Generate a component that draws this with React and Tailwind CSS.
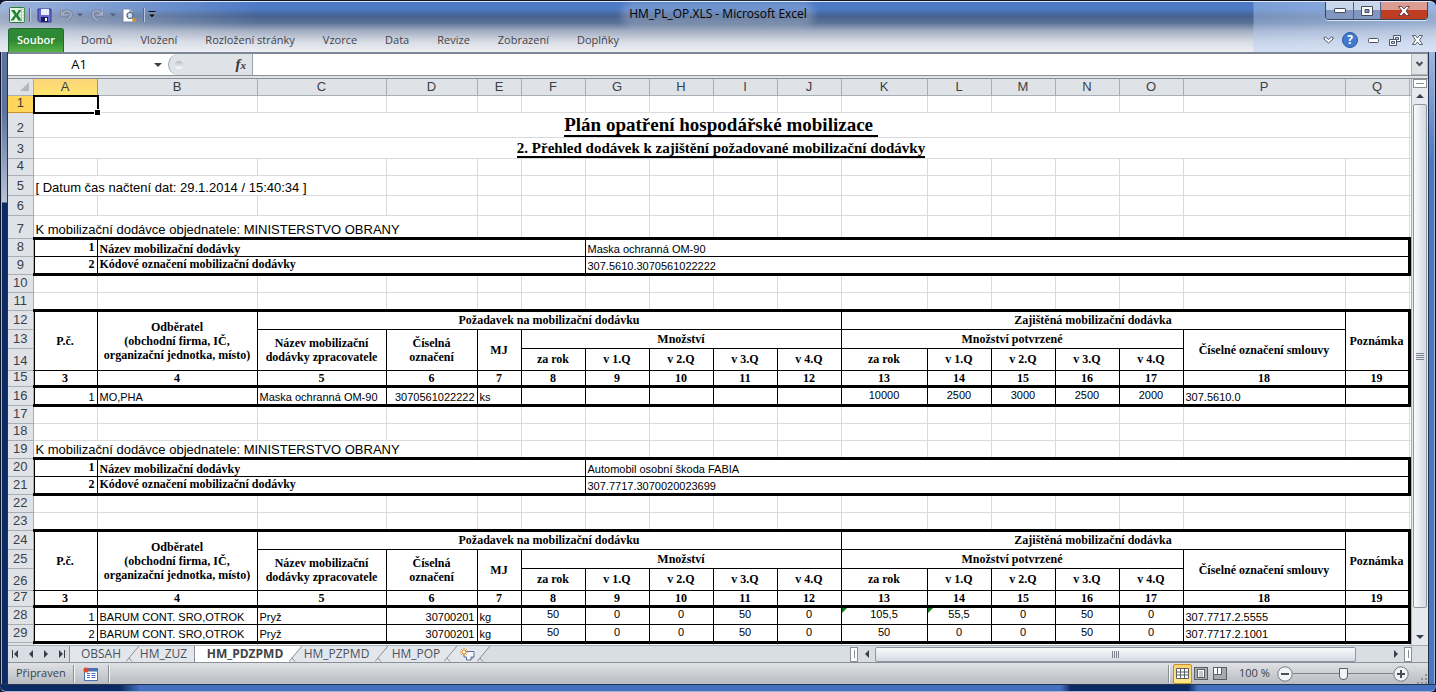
import React, { useState } from "react";

/* =====================================================
   WORKBOOK DATA
====================================================== */

const COLUMNS = [
  { id: "A", width: "w-[64px]" },
  { id: "B", width: "w-[160px]" },
  { id: "C", width: "w-[129px]" },
  { id: "D", width: "w-[91px]" },
  { id: "E", width: "w-[44px]" },
  { id: "F", width: "w-[64px]" },
  { id: "G", width: "w-[64px]" },
  { id: "H", width: "w-[64px]" },
  { id: "I", width: "w-[64px]" },
  { id: "J", width: "w-[64px]" },
  { id: "K", width: "w-[86px]" },
  { id: "L", width: "w-[64px]" },
  { id: "M", width: "w-[64px]" },
  { id: "N", width: "w-[64px]" },
  { id: "O", width: "w-[64px]" },
  { id: "P", width: "w-[162px]" },
  { id: "Q", width: "w-[64px]" },
];

const RIBBON_TABS = [
  "Domů",
  "Vložení",
  "Rozložení stránky",
  "Vzorce",
  "Data",
  "Revize",
  "Zobrazení",
  "Doplňky",
];

const SUPPLIES = [
  {
    firstRow: 7,
    name: "Maska ochranná OM-90",
    code: "307.5610.3070561022222",
    orders: [
      {
        firm: "MO,PHA",
        item: "Maska ochranná OM-90",
        number: "3070561022222",
        unit: "ks",
        requested: ["", "", "", "", ""],
        confirmed: ["10000", "2500", "3000", "2500", "2000"],
        contract: "307.5610.0",
      },
    ],
  },
  {
    firstRow: 19,
    name: "Automobil osobní škoda FABIA",
    code: "307.7717.3070020023699",
    orders: [
      {
        firm: "BARUM CONT. SRO,OTROK",
        item: "Pryž",
        number: "30700201",
        unit: "kg",
        requested: ["50", "0", "0", "50", "0"],
        confirmed: ["105,5", "55,5", "0", "50", "0"],
        contract: "307.7717.2.5555",
      },
      {
        firm: "BARUM CONT. SRO,OTROK",
        item: "Pryž",
        number: "30700201",
        unit: "kg",
        requested: ["50", "0", "0", "50", "0"],
        confirmed: ["50", "0", "0", "50", "0"],
        contract: "307.7717.2.1001",
      },
    ],
  },
];

const QUARTERS = ["za rok", "v 1.Q", "v 2.Q", "v 3.Q", "v 4.Q"];

/* =====================================================
   CELL STYLES
====================================================== */

const GRID = "border-r border-b border-[#d8dadc]";
const BOX = "border-r border-b border-black";
const BOX_LAST = "border-r border-b-[3px] border-black";
const EDGE = "border-r-[3px] border-b border-black";
const EDGE_LAST = "border-r-[3px] border-b-[3px] border-black";
const LEFT = "shadow-[inset_1px_0_0_#000]";
const SERIF = "font-['Liberation_Serif',serif] font-bold text-[12px] leading-[14px]";
const DATA = "text-[11px] leading-[13px]";

/* =====================================================
   WINDOW CHROME
====================================================== */

function ExcelLogo() {
  return (
    <svg width="17" height="17" viewBox="0 0 17 17">
      <rect x="0.5" y="0.5" width="15" height="15" rx="1" fill="#e9f3e6" stroke="#2c7a35" />
      <path d="M10 2h5v12h-5z" fill="#fff" stroke="#8fc08d" strokeWidth="0.6" />
      <path d="M10 5h5M10 8h5M10 11h5M12.5 2v12" stroke="#8fc08d" strokeWidth="0.7" />
      <path d="M2 3h3.600l2 3.600L9.800 3h2.600L9 8l3.800 5.500H9.300L7 9.800 4.600 13.500H1.500L5.600 8z" fill="#1f8434" />
    </svg>
  );
}

function SaveIcon() {
  return (
    <svg width="15" height="15" viewBox="0 0 15 15">
      <path d="M1 1h13v13H2.500L1 12.500z" fill="#6468cf" stroke="#31348f" />
      <rect x="4" y="1" width="8" height="6" fill="#e8eefb" />
      <rect x="4" y="9" width="7" height="5" fill="#1d2058" />
      <rect x="8" y="10" width="2" height="3" fill="#fff" />
    </svg>
  );
}

function UndoIcon({ flip }) {
  return (
    <svg width="13" height="14" viewBox="0 0 13 14" className={flip ? "-scale-x-100" : ""}>
      <path d="M1.500 1v6h6M2.500 6C5 2 10 2 11 5.500 11.500 8.500 9 11 6 12.500" fill="none" stroke="#6d7d9c" strokeWidth="3" />
      <path d="M1.500 1v6h6M2.500 6C5 2 10 2 11 5.500 11.500 8.500 9 11 6 12.500" fill="none" stroke="#a9b1c2" strokeWidth="1.600" />
    </svg>
  );
}

function PreviewIcon() {
  return (
    <svg width="15" height="15" viewBox="0 0 15 15">
      <path d="M1 1h7l3 3v10H1z" fill="#fff" stroke="#7688a5" />
      <path d="M8 1v3h3" fill="#d5deea" stroke="#7688a5" />
      <circle cx="8" cy="7.500" r="3" fill="#cfe3f7" stroke="#4f6482" strokeWidth="1.200" />
      <path d="M10.500 10l3 3.500" stroke="#e0962a" strokeWidth="2.400" />
    </svg>
  );
}

function Arrow({ dir = "down", className = "fill-[#3b4048]" }) {
  const shapes = {
    down: "M0 2h8L4 6z",
    up: "M0 6h8L4 2z",
    left: "M6 0v8L2 4z",
    right: "M2 0v8l4-4z",
  };
  return (
    <svg width="8" height="8" viewBox="0 0 8 8" className={className}>
      <path d={shapes[dir]} />
    </svg>
  );
}

function Separator() {
  return <span className="h-3.5 w-px bg-[#5a6a88] shadow-[1px_0_0_#b9c6dc]" />;
}

function TitleBar() {
  return (
    <div className="relative flex h-[26px] justify-between">
      {/* QUICK ACCESS */}
      <div className="flex items-center pl-[9px]">
        <ExcelLogo />
        <span className="w-[3px]" />
        <Separator />
        <button aria-label="Uložit" className="ml-[7px]">
          <SaveIcon />
        </button>
        <button aria-label="Zpět" className="ml-2 flex items-center gap-1">
          <UndoIcon />
          <Arrow className="fill-[#4f6082] w-1.5" />
        </button>
        <button aria-label="Znovu" className="ml-2 flex items-center gap-1.5">
          <UndoIcon flip />
          <Arrow className="fill-[#4f6082] w-1.5" />
        </button>
        <button aria-label="Náhled" className="ml-1.5">
          <PreviewIcon />
        </button>
        <span className="w-[6px]" />
        <Separator />
        <button aria-label="Přizpůsobit panel" className="ml-1">
          <svg width="8" height="8" viewBox="0 0 8 8">
            <path d="M0.500 0.500h7" stroke="#111" />
            <path d="M0.500 3h7L4 7z" fill="#111" stroke="#d6deec" strokeWidth="0.400" />
          </svg>
        </button>
      </div>

      {/* TITLE */}
      <h1 className="pointer-events-none absolute inset-x-0 top-[3px] flex justify-center">
        <span className="rounded-full bg-white/20 px-1 text-[12px] leading-[18px] text-black shadow-[0_0_7px_4px_rgba(255,255,255,0.2)]">
          HM_PL_OP.XLS - Microsoft Excel
        </span>
      </h1>

      {/* WINDOW BUTTONS */}
      <div className="mr-2 flex h-[18px] rounded-b-[4px] border border-t-0 border-[#36445e] shadow-[0_1px_0_#dbe5f5]">
        <button aria-label="Minimalizovat" className="flex w-7 items-center justify-center rounded-bl-[3px] border-r border-[#4e6084] bg-linear-to-b from-[#c9d5ea] from-45% to-[#8297c0] to-50%">
          <svg width="12" height="5" viewBox="0 0 12 5">
            <rect x="0.500" y="0.500" width="11" height="4" rx="0.500" fill="#fff" stroke="#454c5c" />
          </svg>
        </button>
        <button aria-label="Obnovit" className="flex w-[27px] items-center justify-center border-r border-[#4e6084] bg-linear-to-b from-[#c9d5ea] from-45% to-[#8297c0] to-50%">
          <svg width="12" height="10" viewBox="0 0 12 10">
            <path d="M0.500 0.500h11v9H0.500zM4 3.500v3h4v-3z" fill="#fff" fillRule="evenodd" stroke="#454c5c" />
          </svg>
        </button>
        <button aria-label="Zavřít" className="flex w-[46px] items-center justify-center rounded-br-[3px] bg-linear-to-b from-[#dd9c92] from-45% to-[#bd3c22] to-50%">
          <svg width="12" height="10" viewBox="0 0 12 10">
            <path d="M0.500 0.500h3.200L6 3 8.300 0.500h3.200L8 5l3.500 4.500H8.300L6 7 3.700 9.500H0.500L4 5z" fill="#fff" stroke="#5a3340" strokeWidth="0.900" />
          </svg>
        </button>
      </div>
    </div>
  );
}

function RibbonTabs() {
  return (
    <div className="flex h-6 items-stretch justify-between pl-2">
      <nav className="flex">
        <button className="mr-[3px] w-14 rounded-t-[3px] border border-b-0 border-[#1f6a2a] bg-linear-to-b from-[#2f8a38] via-[#2d8733] to-[#58b348] text-[11px] font-semibold text-white">
          Soubor
        </button>
        {RIBBON_TABS.map((t) => (
          <button key={t} className="px-3.5 text-[11px] text-[#3f444c]">
            {t}
          </button>
        ))}
      </nav>
      <div className="flex items-center pr-[13px]">
        <button aria-label="Sbalit pás karet" className="mr-2">
          <svg width="11" height="8" viewBox="0 0 11 8">
            <path d="M1 1.500 2.500 1 5.500 3.500 8.500 1 10 1.500V3L5.500 7 1 3z" fill="#fff" stroke="#4a5568" />
          </svg>
        </button>
        <button aria-label="Nápověda" className="mr-2.5 flex size-4 items-center justify-center rounded-full border border-[#2c5aa8] bg-[#4379cc] text-[12px] leading-none font-bold text-white">
          ?
        </button>
        <button aria-label="Minimalizovat okno" className="mr-2.5">
          <svg width="11" height="5" viewBox="0 0 11 5">
            <rect x="0.500" y="0.500" width="10" height="4" rx="1" fill="#fff" stroke="#4a5568" />
          </svg>
        </button>
        <button aria-label="Obnovit okno" className="mr-[11px]">
          <svg width="12" height="11" viewBox="0 0 12 11">
            <path d="M4.500 0.500h7v6h-7zM6.500 2.500v2h3v-2z" fill="#fff" fillRule="evenodd" stroke="#4a5568" />
            <path d="M0.500 4.500h7v6h-7zM2.500 6.500v2h3v-2z" fill="#fff" fillRule="evenodd" stroke="#4a5568" />
          </svg>
        </button>
        <button aria-label="Zavřít okno">
          <svg width="11" height="10" viewBox="0 0 11 10">
            <path d="M0.500 0.500h3L5.500 3l2-2.500h3L7.500 5l3 4.500h-3L5.500 7l-2 2.500h-3L3.500 5z" fill="#fff" stroke="#4a5568" strokeWidth="0.900" />
          </svg>
        </button>
      </div>
    </div>
  );
}

function FormulaBar({ cell }) {
  return (
    <div className="flex h-[22px] border-b border-[#8b9097] bg-white">
      <label className="flex w-40 items-center">
        <input
          aria-label="Pole názvů"
          defaultValue={cell}
          className="w-[142px] bg-transparent text-center text-[13px] text-black outline-none"
        />
        <span className="w-1" />
        <Arrow />
      </label>
      <div className="flex w-[85px] items-center justify-between rounded-l-full border-l border-[#9aa0a8] border-r bg-[#dfe3e8] pr-1.5">
        <span className="ml-1.5 size-2 rounded-full bg-linear-to-b from-[#b5bac1] to-white" />
        <button aria-label="Vložit funkci" className="font-['Liberation_Serif',serif] text-[15px] leading-none font-bold italic text-[#33363b]">
          f<span className="text-[11px]">x</span>
        </button>
      </div>
      <input aria-label="Řádek vzorců" className="min-w-0 flex-1 px-1 text-[12px] outline-none" />
      <button aria-label="Rozbalit řádek vzorců" className="flex w-[17px] items-center justify-center border border-t-0 border-[#b3b7bd] bg-[#dfe3e8]">
        <svg width="7" height="6" viewBox="0 0 7 6">
          <path d="M0.500 1l3 3 3-3" fill="none" stroke="#4a4f57" strokeWidth="2" />
        </svg>
      </button>
    </div>
  );
}

/* =====================================================
   SHEET
====================================================== */

function RowHead({ n, active }) {
  return (
    <th
      scope="row"
      className={`border-r border-b px-0 pt-0 pb-[3px] text-center align-bottom font-['Liberation_Sans',sans-serif] text-[13px] leading-[12px] font-normal ${
        active
          ? "border-[#c98f2b] bg-[#ffd65a] text-[#3b3b3b]"
          : "border-[#a9aeb5] bg-[#dfe3e8] text-[#3b3f46]"
      }`}
    >
      {n}
    </th>
  );
}

function EmptyCells({ from = 0, bottom = GRID }) {
  return (
    <>
      {COLUMNS.slice(from).map((c) => (
        <td key={c.id} className={bottom} />
      ))}
      <td className="border-b border-[#d8dadc]" />
    </>
  );
}

const GRID_OVER_BOX = "border-r border-r-[#d8dadc] border-b-[3px] border-b-black";

function SupplyBlock({ supply }) {
  const r = supply.firstRow;
  const first = r === 7;
  return (
    <>
      {/* ORDERED SUPPLY */}
      <tr className={first ? "h-[23px]" : "h-[18px]"}>
        <RowHead n={r} />
        <td colSpan={4} className={`${GRID_OVER_BOX} pl-0.5 align-bottom text-[13px] leading-[14px] whitespace-nowrap`}>
          K mobilizační dodávce objednatele: MINISTERSTVO OBRANY
        </td>
        <EmptyCells from={4} bottom={GRID_OVER_BOX} />
      </tr>
      <tr className="h-[18px]">
        <RowHead n={r + 1} />
        <td className={`${BOX} ${LEFT} ${SERIF} pr-0.5 text-right align-top`}>1</td>
        <td colSpan={5} className={`${BOX} ${SERIF} pl-0.5 align-bottom`}>
          Název mobilizační dodávky
        </td>
        <td colSpan={11} className={`${EDGE} ${DATA} pl-0.5 align-bottom`}>
          {supply.name}
        </td>
        <td />
      </tr>
      <tr className="h-[18px]">
        <RowHead n={r + 2} />
        <td className={`${BOX_LAST} ${LEFT} ${SERIF} pr-0.5 text-right align-top`}>2</td>
        <td colSpan={5} className={`${BOX_LAST} ${SERIF} pl-0.5 align-top`}>
          Kódové označení mobilizační dodávky
        </td>
        <td colSpan={11} className={`${EDGE_LAST} ${DATA} pl-0.5 align-bottom`}>
          {supply.code}
        </td>
        <td />
      </tr>
      <tr className="h-[18px]">
        <RowHead n={r + 3} />
        <EmptyCells />
      </tr>
      <tr className="h-[18px]">
        <RowHead n={r + 4} />
        <EmptyCells bottom={GRID_OVER_BOX} />
      </tr>

      {/* TABLE HEADINGS */}
      <tr className={`h-[19px] text-center ${SERIF}`}>
        <RowHead n={r + 5} />
        <td rowSpan={3} className={`${BOX} ${LEFT}`}>
          P.č.
        </td>
        <td rowSpan={3} className={`${BOX} whitespace-nowrap`}>
          Odběratel
          <br />
          (obchodní firma, IČ,
          <br />
          organizační jednotka, místo)
        </td>
        <td colSpan={8} className={BOX}>
          Požadavek na mobilizační dodávku
        </td>
        <td colSpan={6} className={BOX}>
          Zajištěná mobilizační dodávka
        </td>
        <td rowSpan={3} className={EDGE}>
          Poznámka
        </td>
        <td />
      </tr>
      <tr className={`h-[19px] text-center ${SERIF}`}>
        <RowHead n={r + 6} />
        <td rowSpan={2} className={BOX}>
          Název mobilizační dodávky zpracovatele
        </td>
        <td rowSpan={2} className={BOX}>
          Číselná
          <br />
          označení
        </td>
        <td rowSpan={2} className={BOX}>
          MJ
        </td>
        <td colSpan={5} className={BOX}>
          Množství
        </td>
        <td colSpan={5} className={BOX}>
          Množství potvrzené
        </td>
        <td rowSpan={2} className={BOX}>
          Číselné označení smlouvy
        </td>
        <td />
      </tr>
      <tr className={`h-[22px] text-center ${SERIF}`}>
        <RowHead n={r + 7} />
        {[...QUARTERS, ...QUARTERS].map((q, i) => (
          <td key={i} className={BOX}>
            {q}
          </td>
        ))}
        <td />
      </tr>
      <tr className={`h-[16px] text-center ${SERIF}`}>
        <RowHead n={r + 8} />
        {COLUMNS.map((c, i) => (
          <td
            key={c.id}
            className={`leading-[12px] ${i === 16 ? EDGE_LAST : BOX_LAST} ${i === 0 ? LEFT : ""}`}
          >
            {i + 3}
          </td>
        ))}
        <td />
      </tr>

      {/* ORDERS */}
      {supply.orders.map((o, i) => {
        const last = i === supply.orders.length - 1;
        const box = last ? BOX_LAST : BOX;
        const numbers = last ? "align-middle" : "align-top";
        return (
          <tr key={i} className={`${first ? "h-[19px]" : "h-[18px]"} ${DATA}`}>
            <RowHead n={r + 9 + i} />
            <td className={`${box} ${LEFT} pr-0.5 text-right align-bottom`}>{i + 1}</td>
            <td className={`${box} pl-0.5 align-bottom whitespace-nowrap`}>{o.firm}</td>
            <td className={`${box} pl-0.5 align-bottom whitespace-nowrap`}>{o.item}</td>
            <td className={`${box} pr-0.5 text-right align-bottom`}>{o.number}</td>
            <td className={`${box} pl-0.5 align-bottom`}>{o.unit}</td>
            {[...o.requested, ...o.confirmed].map((v, j) => (
              <td key={j} className={`${box} ${numbers} relative text-center`}>
                {v.includes(",") && (
                  <svg width="5" height="5" viewBox="0 0 5 5" className="absolute top-0 left-0">
                    <path d="M0 0h5L0 5z" fill="#0a7a1c" />
                  </svg>
                )}
                {v}
              </td>
            ))}
            <td className={`${box} pl-0.5 align-bottom`}>{o.contract}</td>
            <td className={last ? EDGE_LAST : EDGE} />
            <td />
          </tr>
        );
      })}
    </>
  );
}

function Sheet() {
  return (
    <table className="w-full table-fixed border-collapse bg-white font-['Liberation_Sans',sans-serif] text-black">
      <colgroup>
        <col className="w-[25px]" />
        {COLUMNS.map((c) => (
          <col key={c.id} className={c.width} />
        ))}
        <col />
      </colgroup>
      <thead>
        <tr className="h-4 bg-[#dfe3e8] text-[13px] leading-[14px] text-[#3b3f46]">
          <th className="border-r border-b border-[#a9aeb5]">
            <svg width="9" height="9" viewBox="0 0 9 9" className="ml-auto mr-1">
              <path d="M9 0v9H0z" fill="#b4b9c0" />
            </svg>
          </th>
          {COLUMNS.map((c) => (
            <th
              key={c.id}
              scope="col"
              className={`border-r border-b font-normal ${
                c.id === "A"
                  ? "border-[#c98f2b] bg-linear-to-b from-[#fbd377] to-[#ffe66e]"
                  : "border-[#a9aeb5]"
              }`}
            >
              {c.id}
            </th>
          ))}
          <th className="border-b border-[#a9aeb5]" />
        </tr>
      </thead>
      <tbody>
        <tr className="h-[17px]">
          <RowHead n={1} active />
          <td className="relative border-r border-b border-[#d8dadc]">
            <span className="absolute -inset-px -right-0.5 -bottom-0.5 border-2 border-black" />
            <span className="absolute -right-1 -bottom-1 size-[7px] border border-white bg-black" />
          </td>
          <EmptyCells from={1} />
        </tr>
        <tr className="h-[25px]">
          <RowHead n={2} />
          <td colSpan={17} className={`${GRID} text-center align-middle font-['Liberation_Serif',serif] text-[19px] leading-[20px] font-bold`}>
            <span className="border-b-2 border-black whitespace-pre">{"Plán opatření hospodářské mobilizace "}</span>
          </td>
          <td className="border-b border-[#d8dadc]" />
        </tr>
        <tr className="h-[21px]">
          <RowHead n={3} />
          <td colSpan={17} className={`${GRID} text-center align-middle font-['Liberation_Serif',serif] text-[15px] leading-[18px] font-bold`}>
            <span className="border-b-2 border-black">
              2. Přehled dodávek k zajištění požadované mobilizační dodávky
            </span>
          </td>
          <td className="border-b border-[#d8dadc]" />
        </tr>
        <tr className="h-[17px]">
          <RowHead n={4} />
          <EmptyCells />
        </tr>
        <tr className="h-5">
          <RowHead n={5} />
          <td colSpan={3} className={`${GRID} pl-0.5 align-bottom text-[13px] leading-[14px] whitespace-nowrap`}>
            [ Datum čas načtení dat: 29.1.2014 / 15:40:34 ]
          </td>
          <EmptyCells from={3} />
        </tr>
        <tr className="h-5">
          <RowHead n={6} />
          <EmptyCells />
        </tr>

        <SupplyBlock supply={SUPPLIES[0]} />

        <tr className="h-[18px]">
          <RowHead n={17} />
          <EmptyCells />
        </tr>
        <tr className="h-[17px]">
          <RowHead n={18} />
          <EmptyCells />
        </tr>

        <SupplyBlock supply={SUPPLIES[1]} />

        <tr className="h-[18px]">
          <RowHead />
          <EmptyCells />
        </tr>
      </tbody>
    </table>
  );
}

function VerticalScroll() {
  return (
    <div className="flex w-[17px] shrink-0 flex-col items-center border-l border-[#a9aeb5] bg-[#e6e9ee]">
      <span className="flex h-[9px] w-3.5 items-center justify-center border border-[#8b9097] bg-white">
        <span className="h-px w-2 bg-[#8b9097]" />
      </span>
      <button aria-label="Nahoru" className="flex h-4 items-center">
        <Arrow dir="up" />
      </button>
      <div className="flex w-full flex-1 flex-col items-center">
        <div className="flex h-[96%] w-3.5 flex-col items-center justify-center gap-px rounded-[2px] border border-[#8f96a3] bg-linear-to-r from-[#fafbfc] to-[#d5d9e1]">
          <span className="h-px w-2 bg-[#7d838d]" />
          <span className="h-px w-2 bg-[#7d838d]" />
          <span className="h-px w-2 bg-[#7d838d]" />
          <span className="h-px w-2 bg-[#7d838d]" />
        </div>
      </div>
      <button aria-label="Dolů" className="flex h-4 items-center">
        <Arrow dir="down" />
      </button>
    </div>
  );
}

/* =====================================================
   BOTTOM BARS
====================================================== */

// Slanted edge between two sheet tabs
function Slant({ left = "#e3e6eb", right = "#e3e6eb" }) {
  return (
    <svg width="13" height="16" viewBox="0 0 13 16" className="shrink-0">
      <path d="M0 0h13L0 16z" fill={left} />
      <path d="M13 0v16H0z" fill={right} />
      <path d="M13 0L0 15.500M3 12l3 3.500" fill="none" stroke="#8b9097" />
    </svg>
  );
}

function NavArrow({ dir, end, label }) {
  return (
    <button aria-label={label} className="flex h-full w-[15px] items-center justify-center">
      <svg width="8" height="8" viewBox="0 0 8 8" className={dir === "right" ? "-scale-x-100" : ""}>
        <path d="M6 0v8L2 4z" fill="#3b4048" />
        {end && <path d="M0.500 0v8" stroke="#3b4048" />}
      </svg>
    </button>
  );
}

function SheetTabs() {
  const [active, setActive] = useState("HM_PDZPMD");
  const tab = (name, width) => (
    <button
      onClick={() => setActive(name)}
      className={`h-4 text-center text-[12px] leading-4 ${width} ${
        active === name ? "bg-white font-bold text-[#3f434a]" : "bg-[#e3e6eb] text-[#4d525a]"
      }`}
    >
      {name}
    </button>
  );
  const fill = (name) => (active === name ? "#ffffff" : "#e3e6eb");

  return (
    <div className="flex h-[17px] items-start border-t border-[#a9aeb5] bg-[#d9dde4]">
      <div className="flex h-4 w-[62px] items-center border-r border-[#8b9097]">
        <NavArrow dir="left" end label="První list" />
        <NavArrow dir="left" label="Předchozí list" />
        <NavArrow dir="right" label="Další list" />
        <NavArrow dir="right" end label="Poslední list" />
      </div>
      {tab("OBSAH", "w-14 pl-1.5")}
      <Slant left={fill("OBSAH")} right={fill("HM_ZUZ")} />
      {tab("HM_ZUZ", "w-[56px] border-r border-[#8b9097] pr-1.5")}
      {tab("HM_PDZPMD", "w-[94px] pl-1.5")}
      <Slant left={fill("HM_PDZPMD")} right={fill("HM_PZPMD")} />
      {tab("HM_PZPMD", "w-[73px] pr-1")}
      <Slant left={fill("HM_PZPMD")} right={fill("HM_POP")} />
      {tab("HM_POP", "w-[56px]")}
      <Slant left={fill("HM_POP")} />
      <button aria-label="Vložit list" className="flex h-4 w-5 items-center justify-center bg-[#e3e6eb]">
        <svg width="15" height="13" viewBox="0 0 15 13">
          <path d="M4 3.500h10V9l-3 3H6.500V9H4z" fill="#f4f7fd" stroke="#5c6f9b" />
          <path d="M11 12V9h3" fill="#b9c8e6" stroke="#5c6f9b" />
          <path d="M4 0v8M0 4h8M1.200 1.200l5.600 5.600M6.800 1.200L1.200 6.800" stroke="#e08f1d" />
          <circle cx="4" cy="4" r="1.500" fill="#fff3c4" />
        </svg>
      </button>
      <Slant right="#d9dde4" />

      {/* HORIZONTAL SCROLL */}
      <div className="ml-auto flex h-4 w-[578px] items-center">
        <span className="flex h-[15px] w-2 items-center justify-center border border-[#8b9097] bg-white">
          <span className="h-2 w-px bg-[#8b9097]" />
        </span>
        <button aria-label="Doleva" className="flex h-4 w-[17px] items-center justify-center">
          <Arrow dir="left" />
        </button>
        <div className="flex h-[15px] w-[481px] items-center justify-center gap-px rounded-[2px] border border-[#8f96a3] bg-linear-to-b from-[#fafbfc] to-[#d5d9e1]">
          <span className="h-[7px] w-px bg-[#7d838d]" />
          <span className="h-[7px] w-px bg-[#7d838d]" />
          <span className="h-[7px] w-px bg-[#7d838d]" />
          <span className="h-[7px] w-px bg-[#7d838d]" />
        </div>
        <button aria-label="Doprava" className="ml-auto flex h-4 w-[17px] items-center justify-center">
          <Arrow dir="right" />
        </button>
        <span className="flex h-[15px] w-2 items-center justify-center border border-[#8b9097] bg-white">
          <span className="h-2 w-px bg-[#8b9097]" />
        </span>
        <span className="w-4" />
      </div>
    </div>
  );
}

function ZoomButton({ label, plus, onClick }) {
  return (
    <button aria-label={label} onClick={onClick}>
      <svg width="16" height="16" viewBox="0 0 16 16">
        <circle cx="8" cy="8" r="7.200" fill="#f2f3f5" stroke="#747a83" />
        <path d={plus ? "M4 8h8M8 4v8" : "M4 8h8"} stroke="#4a4f57" strokeWidth="2" />
      </svg>
    </button>
  );
}

function StatusBar() {
  const [zoom, setZoom] = useState(100);
  return (
    <div className="flex h-[22px] items-center border-t border-[#8b9097] bg-linear-to-b from-[#dfe1e4] to-[#b9bcc2] text-[11px] text-[#3b3f46]">
      <span className="w-[65px] pl-2">Připraven</span>
      <span className="h-[18px] w-px bg-[#8b9097] shadow-[1px_0_0_#f3f4f6]" />
      <button aria-label="Záznam makra" className="mx-[9px]">
        <svg width="16" height="14" viewBox="0 0 16 14">
          <rect x="1.500" y="1.500" width="13" height="12" fill="#fff" stroke="#4a6fb5" />
          <rect x="2" y="2" width="12" height="2.500" fill="#4a6fb5" />
          <path d="M4 6.500h3M8.500 6.500h4M4 8.500h3M8.500 8.500h4M4 10.500h3M8.500 10.500h4" stroke="#4a6fb5" />
          <circle cx="3" cy="3" r="2.600" fill="#dc4a2b" />
        </svg>
      </button>
      <span className="h-[18px] w-px bg-[#8b9097] shadow-[1px_0_0_#f3f4f6]" />

      <div className="ml-auto flex items-center">
        <span className="mr-1 h-[18px] w-px bg-[#8b9097] shadow-[1px_0_0_#f3f4f6]" />
        <button aria-label="Normálně" className="flex h-5 w-[19px] items-center justify-center rounded-[2px] border border-[#c2902e] bg-linear-to-b from-[#fbd36a] to-[#ffea86]">
          <svg width="13" height="11" viewBox="0 0 13 11">
            <path d="M0.500 0.500h12v10H0.500zM0.500 4h12M0.500 7h12M4.500 0.500v10M8.500 0.500v10" fill="#fff" stroke="#5a5f67" />
          </svg>
        </button>
        <button aria-label="Rozložení stránky" className="ml-0.5">
          <svg width="14" height="13" viewBox="0 0 14 13">
            <rect x="0.500" y="0.500" width="13" height="12" fill="#a6abb3" stroke="#5a5f67" />
            <rect x="3.500" y="2.500" width="7" height="8" fill="#fff" stroke="#5a5f67" />
            <path d="M5 5h4M5 7h4M5 9h4" stroke="#8b9097" />
          </svg>
        </button>
        <button aria-label="Konce stránek" className="ml-[5px]">
          <svg width="14" height="13" viewBox="0 0 14 13">
            <rect x="0.500" y="0.500" width="13" height="12" fill="#a6abb3" stroke="#5a5f67" />
            <path d="M0.500 0.500h4v7h-4zM4.500 0.500h4v7h-4z" fill="#fff" stroke="#5a5f67" />
          </svg>
        </button>
        <span className="ml-3 w-[38px]">{zoom} %</span>
        <ZoomButton label="Oddálit" onClick={() => setZoom(Math.max(10, zoom - 10))} />
        <input
          type="range"
          aria-label="Lupa"
          min="0"
          max="200"
          value={zoom}
          onChange={(e) => setZoom(Number(e.target.value))}
          className="h-4 w-[100px] appearance-none bg-[linear-gradient(#7d838d,#7d838d)] bg-[length:100%_1px] bg-center bg-no-repeat [&::-webkit-slider-thumb]:h-3 [&::-webkit-slider-thumb]:w-[9px] [&::-webkit-slider-thumb]:appearance-none [&::-webkit-slider-thumb]:rounded-b-[4px] [&::-webkit-slider-thumb]:border [&::-webkit-slider-thumb]:border-[#5a5f67] [&::-webkit-slider-thumb]:bg-[#f2f3f5]"
        />
        <ZoomButton label="Přiblížit" plus onClick={() => setZoom(Math.min(200, zoom + 10))} />
        <svg width="11" height="20" viewBox="0 0 11 20" className="ml-2">
          <path d="M8 10h2v2H8zM8 14h2v2H8zM8 18h2v2H8zM4 14h2v2H4zM4 18h2v2H4zM0 18h2v2H0z" fill="#8d929a" />
        </svg>
      </div>
    </div>
  );
}

export default function App() {
  return (
    <div className="flex h-screen flex-col overflow-hidden bg-[#0d1526] pt-px font-['Open_Sans',sans-serif]">
      {/* TITLE + RIBBON */}
      <header className="rounded-t-[6px] border-t border-[#dfe8f6] bg-[linear-gradient(90deg,rgba(225,230,240,0.55),rgba(225,230,240,0)_260px,rgba(180,203,240,0)_calc(100%-183px),rgba(180,203,240,0.45)_calc(100%-182px),rgba(200,218,245,0.6)),linear-gradient(#4c79c4_0%,#4c79c4_14%,#46628f_28%,#5a7299_42%,#a3aec3_58%,#d8dce4_80%,#eff0f4_100%)]">
        <TitleBar />
        <RibbonTabs />
      </header>

      <div className="flex min-h-0 flex-1">
        <div className="w-2 shrink-0 border-x border-l-[#0d1526] border-r-[#26334d] bg-[linear-gradient(#5d739f_0px,#5d739f_60px,#b8c4d8_150px,#0b2a63_151px)] shadow-[inset_1px_0_0_#9fb3d6]" />
        <main className="flex min-w-0 flex-1 flex-col bg-[#dfe3e8]">
          <div className="h-[2px] bg-[#7e8795]" />
          <FormulaBar cell="A1" />
          <div className="h-[2px]" />
          <div className="flex min-h-0 flex-1 border-t border-[#8b9097]">
            <div className="min-w-0 flex-1 overflow-hidden bg-white">
              <Sheet />
            </div>
            <VerticalScroll />
          </div>
          <SheetTabs />
          <StatusBar />
        </main>
        <div className="w-2 shrink-0 border-x border-l-[#26334d] border-r-[#0d1526] bg-[linear-gradient(#9db8e2_0px,#4a78c0_110px)] shadow-[inset_-1px_0_0_#9fb3d6]" />
      </div>
      <div className="h-2 shrink-0 rounded-b-[6px] border-y border-t-[#26334d] border-b-[#9fb3d6] bg-[linear-gradient(90deg,#0b2a63_0,#0b2a63_120px,#4470bf_140px,#4470bf_calc(100%-375px),#0b2a63_calc(100%-365px),#0b2a63_calc(100%-248px),#4470bf_calc(100%-238px))]" />
    </div>
  );
}
